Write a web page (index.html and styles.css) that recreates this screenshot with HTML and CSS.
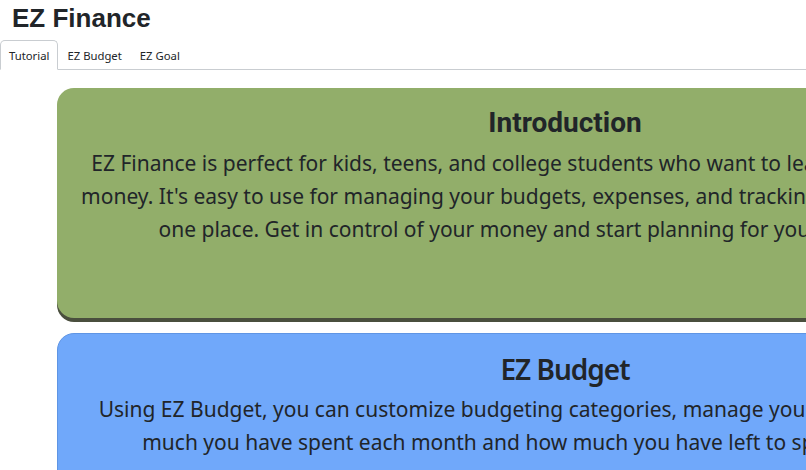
FILE: index.html
```html
<!DOCTYPE html>
<html lang="en">
<head>
<meta charset="utf-8">
<title>EZ Finance</title>
<link rel="stylesheet" href="styles.css">
</head>
<body>
<header class="app-header">
  <h1 class="app-title">EZ Finance</h1>
  <nav class="tabs">
    <a class="tab active" href="#">Tutorial</a>
    <a class="tab" href="#">EZ Budget</a>
    <a class="tab" href="#">EZ Goal</a>
  </nav>
</header>
<main class="content">
  <section class="card card-intro">
    <h2 class="card-title title-intro">Introduction</h2>
    <p class="card-text">EZ Finance is perfect for kids, teens, and college students who want to learn how to budget their<br>money. It's easy to use for managing your budgets, expenses, and tracking your saving goals all in<br>one place. Get in control of your money and start planning for your future success!</p>
  </section>
  <section class="card card-budget">
    <h2 class="card-title title-budget">EZ Budget</h2>
    <p class="card-text">Using EZ Budget, you can customize budgeting categories, manage your expense and see how<br>much you have spent each month and how much you have left to spend per category.</p>
  </section>
</main>
</body>
</html>
```
FILE: styles.css
```css
html, body {
  margin: 0;
  padding: 0;
  background: #ffffff;
  overflow: hidden;
}
body {
  font-family: "Noto Sans", "Open Sans", sans-serif;
  color: #212529;
  width: 806px;
  height: 470px;
}
.app-header {
  display: flex;
  flex-direction: column;
}
.app-title {
  margin: 0 0 4px 0;
  padding-left: 12px;
  font-family: "Liberation Sans", Arial, sans-serif;
  font-weight: 700;
  font-size: 26px;
  line-height: 36px;
  color: #212529;
}
.tabs {
  display: flex;
  border-bottom: 1px solid #c9cdd1;
  height: 29px;
}
.tab {
  display: flex;
  align-items: center;
  padding: 0 8px;
  font-size: 11.3px;
  color: #212529;
  text-decoration: none;
  border: 1px solid transparent;
  border-top-left-radius: 5px;
  border-top-right-radius: 5px;
  margin-bottom: -1px;
}
.tab.active {
  border-color: #c9cdd1 #c9cdd1 #ffffff;
  background: #ffffff;
}
.content {
  display: flex;
  flex-direction: column;
  gap: 15px;
  padding: 18px 0 0 57px;
}
.card {
  width: 1016px;
  flex: none;
  box-sizing: border-box;
  border-radius: 17px;
  text-align: center;
  padding: 14px 20px 0;
}
.card-intro {
  height: 230px;
  background: #92ae6a;
  box-shadow: 0 4px 0 #4a4f3e;
}
.card-budget {
  height: 240px;
  background: #70a8fa;
  border: 1px solid #5f95e4;
}
.card-title {
  margin: 0 0 3px 0;
  font-size: 28px;
  line-height: 42px;
}
.title-intro {
  font-family: Roboto, "Liberation Sans", sans-serif;
  font-weight: 700;
}
.title-budget {
  font-family: "Noto Sans", sans-serif;
  font-weight: 600;
  letter-spacing: -1px;
}
.card-text {
  margin: 0;
  font-size: 21px;
  line-height: 33px;
  white-space: nowrap;
}
```
